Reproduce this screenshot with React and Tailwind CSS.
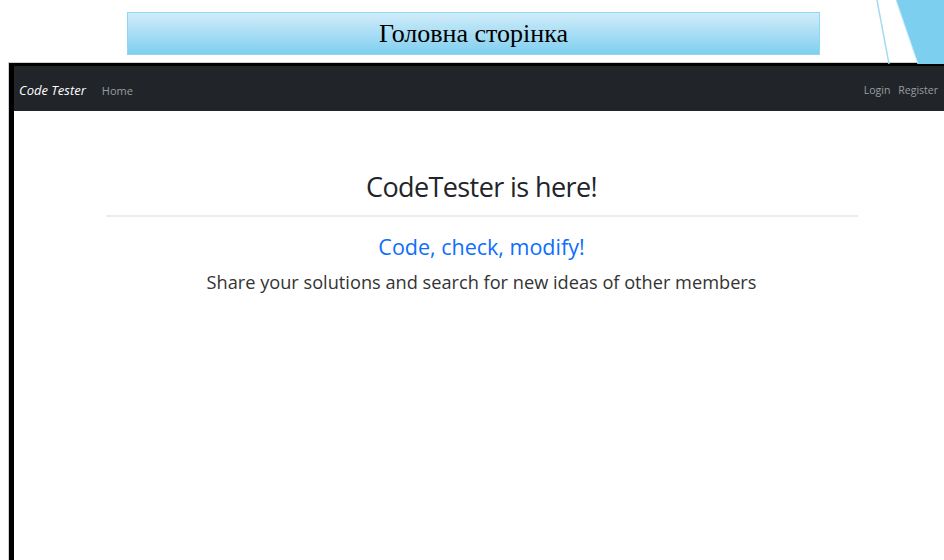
export default function App() {
  return (
    <div className="relative h-[560px] w-[944px] overflow-hidden bg-white">
      {/* slide corner accent */}
      <svg className="absolute right-0 top-0" width="80" height="64" viewBox="0 0 80 64">
        <line x1="13" y1="0" x2="25" y2="64" stroke="#9fdcf3" strokeWidth="1.5" />
        <polygon points="32,0 80,0 80,64 54,64" fill="#7ccfee" />
        <line x1="32" y1="0" x2="54" y2="64" stroke="#c3e9f8" strokeWidth="1" />
      </svg>

      {/* slide title */}
      <div className="pt-3 pl-[127px]">
        <div className="flex h-[43px] w-[693px] items-center justify-center border border-[#8fd8f3] bg-gradient-to-b from-[#d0ecf9] to-[#7ecff0]">
          <span className="font-['Liberation_Serif',serif] text-[26px] leading-none text-black">Головна сторінка</span>
        </div>
      </div>

      {/* browser screenshot */}
      <div className="mt-[7px] ml-2 h-[500px] w-[941px] border-t border-l border-[#d0d0d0]">
        <div className="h-full border-t-[3px] border-l-[5px] border-black bg-white font-['Open_Sans',sans-serif]">
          <nav className="flex h-[45px] items-center bg-[#212529] pt-[5px] pl-[5px]">
            <span className="text-[13px] italic text-white">Code Tester</span>
            <span className="ml-4 text-[11px] text-[#9a9da0]">Home</span>
            <div className="ml-auto flex gap-[8px] pr-[11px] text-[10.5px] text-[#9a9da0]">
              <span>Login</span>
              <span>Register</span>
            </div>
          </nav>

          <div className="flex flex-col items-center pt-[56px]">
            <h1 className="text-[27px] leading-[40px] tracking-[-0.6px] text-[#212529]">CodeTester is here!</h1>
            <hr className="mt-[8px] w-[752px] border-t-2 border-[#ececec]" />
            <p className="mt-[15px] text-[21.5px] leading-[30px] text-[#0d6efd]">Code, check, modify!</p>
            <p className="mt-[6px] text-[18.2px] leading-[28px] text-[#333]">
              Share your solutions and search for new ideas of other members
            </p>
          </div>
        </div>
      </div>
    </div>
  );
}
